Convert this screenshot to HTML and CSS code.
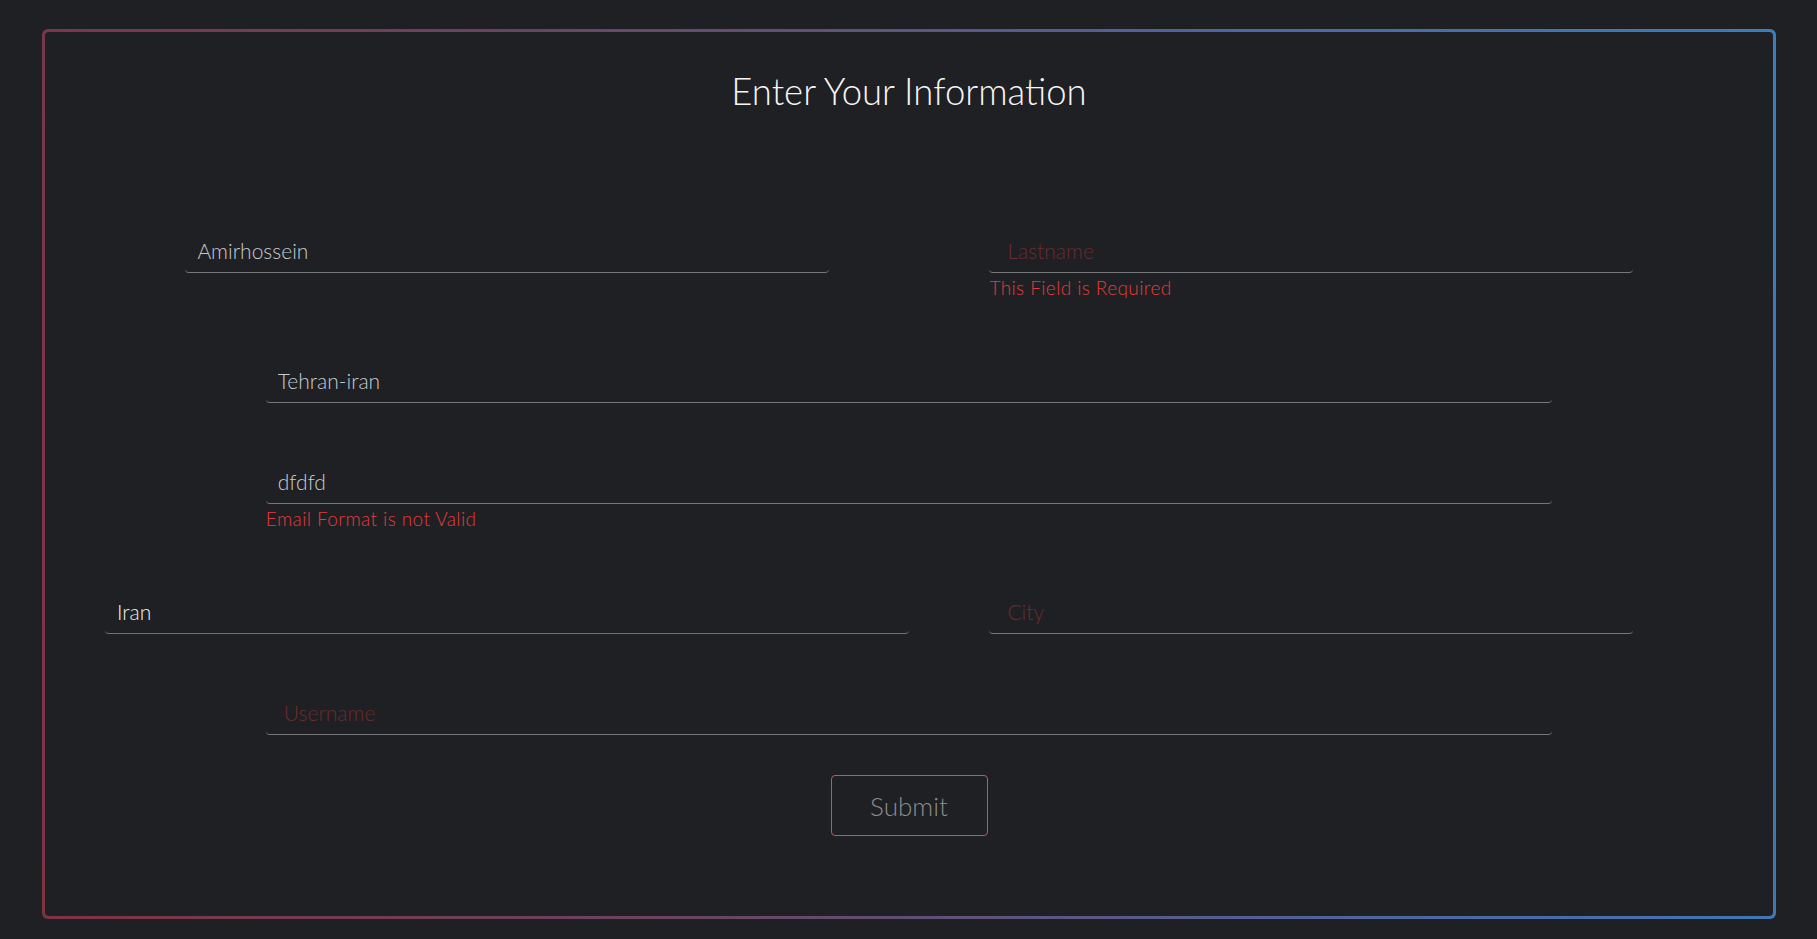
FILE: index.html
```html
<!DOCTYPE html>
<html lang="en">
<head>
<meta charset="utf-8">
<title>Enter Your Information</title>
<link rel="stylesheet" href="styles.css">
</head>
<body>
<div class="frame">
  <div class="panel">
    <h1 class="title">Enter Your Information</h1>
    <form class="form">
      <div class="field">
        <div class="control">
          <input class="input" type="text" value="Amirhossein" placeholder="Firstname">
        </div>
      </div>
      <div class="field">
        <div class="control">
          <input class="input empty" type="text" placeholder="Lastname">
          <div class="error">This Field is Required</div>
        </div>
      </div>
      <div class="field span">
        <div class="control">
          <input class="input" type="text" value="Tehran-iran" placeholder="Address">
        </div>
      </div>
      <div class="field span">
        <div class="control">
          <input class="input" type="text" value="dfdfd" placeholder="Email">
          <div class="error">Email Format is not Valid</div>
        </div>
      </div>
      <div class="field">
        <div class="control wide">
          <input class="input focused" type="text" value="Iran" placeholder="Country">
        </div>
      </div>
      <div class="field">
        <div class="control">
          <input class="input empty" type="text" placeholder="City">
        </div>
      </div>
      <div class="field span">
        <div class="control">
          <input class="input empty" type="text" placeholder="Username">
        </div>
      </div>
      <div class="actions">
        <button class="submit" type="button">Submit</button>
      </div>
    </form>
  </div>
</div>
</body>
</html>
```
FILE: styles.css
```css
* {
  box-sizing: border-box;
}

html, body {
  margin: 0;
  background: #1f2023;
}

body {
  padding: 29px 41px 20px 42px;
  font-family: Lato, "Open Sans", "Liberation Sans", sans-serif;
  font-weight: 300;
}

.frame {
  padding: 3px;
  border-radius: 6px;
  background: linear-gradient(80deg, #7e3343 0%, #6b4463 35%, #4f64a0 70%, #3b7eba 100%);
}

.panel {
  background: #1f2023;
  border-radius: 4px;
  padding: 38px 60px 80px;
}

.title {
  margin: 0;
  text-align: center;
  font-size: 36.5px;
  line-height: 43px;
  font-weight: 300;
  color: #f6f6f6;
}

.form {
  margin-top: 59px;
  display: grid;
  grid-template-columns: 1fr 1fr;
}

.field {
  margin-top: 56px;
  display: flex;
  justify-content: center;
  align-items: flex-start;
}

.field.span {
  grid-column: 1 / -1;
}

.control {
  width: 80%;
  display: flex;
  flex-direction: column;
}

.control.wide {
  width: 100%;
}

.input {
  width: 100%;
  height: 45px;
  padding: 10px 12px;
  border: none;
  border-bottom: 1px solid #76777a;
  border-radius: 4px;
  background: transparent;
  outline: none;
  font-family: Lato, "Open Sans", "Liberation Sans", sans-serif;
  font-weight: 300;
  font-size: 21px;
  line-height: 24px;
  color: #c6cbd2;
}

.input.empty {
  padding-left: 18px;
}

.input::placeholder {
  color: #6a2d30;
  opacity: 1;
}

.input.focused {
  border-bottom-color: #b25558;
  color: #f0f0f0;
}

.error {
  font-size: 19px;
  line-height: 29px;
  letter-spacing: 0.4px;
  font-weight: 300;
  color: #e23c3c;
}

.actions {
  grid-column: 1 / -1;
  display: flex;
  justify-content: center;
  margin-top: 40px;
}

.submit {
  width: 157px;
  height: 61px;
  border: 1px solid #c65456;
  border-radius: 4px;
  background: transparent;
  font-family: Lato, "Open Sans", "Liberation Sans", sans-serif;
  font-weight: 300;
  font-size: 26px;
  color: #8c8d90;
  cursor: pointer;
}
```
